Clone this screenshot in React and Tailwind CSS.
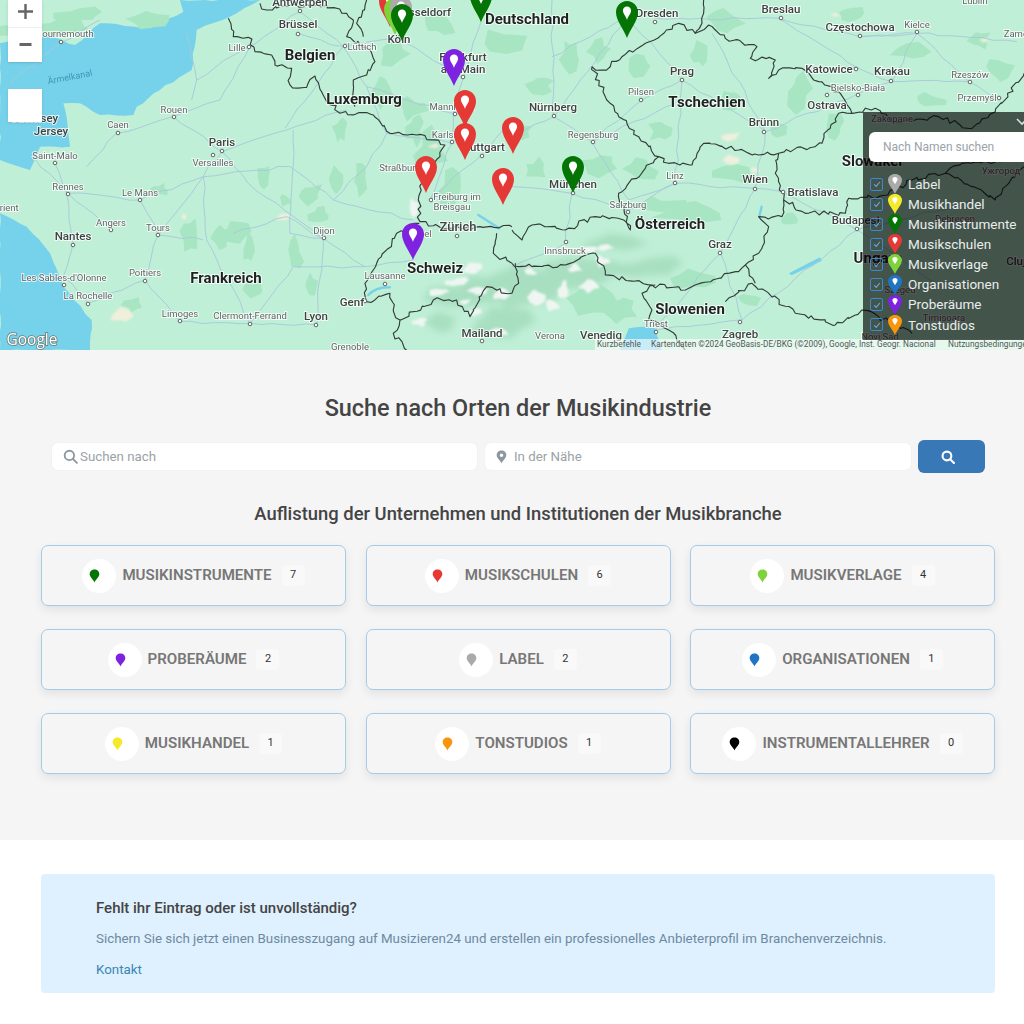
import React from "react";

const FONT = "Roboto, 'Liberation Sans', sans-serif";

/* ---------------- MAP DATA ---------------- */
const boldLabels = [
  ["Belgien", 310, 60], ["Luxemburg", 364, 104], ["Frankreich", 226, 283], ["Schweiz", 435, 273],
  ["Deutschland", 527, 24], ["Tschechien", 707, 107], ["Österreich", 670, 229], ["Slowenien", 690, 314],
  ["Slowakei", 872, 166], ["Ungarn", 878, 263],
];

const cityLabels = [
  ["Antwerpen", 300, 6], ["Brüssel", 298, 28], ["Köln", 399, 43], ["Jersey", 51, 135], ["Guernsey", 34, 122],
  ["Paris", 222, 146], ["Nantes", 73, 240], ["Lyon", 316, 320], ["Genf", 352, 306], ["Mailand", 482, 337],
  ["Frankfurt", 463, 61], ["am Main", 463, 73], ["Düsseldorf", 423, 16],
  ["Prag", 682, 75], ["Wien", 755, 183], ["Bratislava", 813, 196], ["Budapest", 856, 224], ["Zagreb", 740, 338],
  ["Venedig", 601, 339], ["Nürnberg", 553, 111], ["Breslau", 781, 13], ["Katowice", 829, 73], ["Krakau", 892, 75],
  ["Częstochowa", 860, 31], ["Ostrava", 827, 109], ["Brünn", 764, 126], ["Graz", 720, 248], ["Stuttgart", 482, 151],
  ["München", 573, 188], ["Dresden", 657, 17], ["Cluj-", 1018, 265],
];

const smallLabels = [
  ["Bournemouth", 65, 37], ["Rouen", 174, 113], ["Caen", 118, 128], ["Versailles", 213, 166], ["Saint-Malo", 55, 159],
  ["Rennes", 68, 190], ["Le Mans", 140, 196], ["Angers", 111, 226], ["Tours", 158, 231], ["Poitiers", 145, 276],
  ["Les Sables-d'Olonne", 64, 281], ["La Rochelle", 88, 299], ["Limoges", 180, 317], ["Clermont-Ferrand", 250, 319],
  ["Dijon", 324, 234], ["Lausanne", 385, 279], ["Lille", 237, 51], ["Lüttich", 362, 50], ["Mannheim", 452, 110],
  ["Karlsruhe", 452, 138], ["Straßburg", 400, 171], ["Freiburg im", 457, 200], ["Breisgau", 452, 210], ["Basel", 420, 237],
  ["Grenoble", 350, 350], ["Triest", 656, 327], ["Verona", 550, 339], ["Regensburg", 593, 138], ["Pilsen", 641, 95],
  ["Linz", 675, 179], ["Salzburg", 628, 208], ["Innsbruck", 565, 254], ["Kielce", 917, 28], ["Rzeszów", 970, 78],
  ["Przemyśl", 977, 101], ["Bielsko-Biała", 858, 91], ["Zakopane", 892, 122], ["Lublin", 975, 4], ["Zamo", 1016, 37],
  ["Szeged", 900, 293], ["Debrecen", 955, 222], ["Ужгород", 1001, 174], ["Timisoara", 944, 321], ["Novi Sad", 880, 340],
  ["Orient", 6, 211],
];

const cityDots = [
  [300, 11], [298, 34], [61, 42], [249, 47], [345, 46], [174, 117], [118, 133], [213, 155], [222, 151], [55, 163],
  [68, 194], [140, 200], [111, 230], [158, 235], [73, 245], [145, 281], [64, 285], [88, 304], [180, 321], [250, 324],
  [316, 325], [324, 238], [385, 284], [365, 301], [457, 236], [482, 341], [463, 77], [455, 114], [452, 142], [482, 156],
  [431, 200], [554, 116], [593, 142], [641, 100], [682, 80], [755, 189], [783, 192], [764, 132], [720, 253], [675, 183],
  [628, 212], [566, 242], [573, 193], [655, 22], [781, 18], [860, 36], [917, 32], [856, 69], [891, 81], [827, 95],
  [858, 95], [970, 82], [999, 98], [857, 229], [740, 322], [656, 332],
];

// coordinates below are on a 3x grid, the group is scaled down to page pixels
const borders = [
  "M685 55 L700 110 L745 112 L765 155 L815 165 L825 195 L875 205 L870 255 L920 262 L945 228 L975 295 L1020 340 L1120 345 L1170 400 L1250 405 L1335 435 L1320 470 L1265 550 L1255 600 L1260 665 L1320 682 L1440 680 L1536 680",
  "M1258 670 L1190 700 L1130 790 L1095 850 L1100 905 L1170 880 L1180 930 L1200 960 L1180 1000 L1220 1050",
  "M1200 960 L1300 900 L1370 900 L1410 950 L1460 860 L1536 880",
  "M780 10 L800 30 L870 15 L950 15 L1040 40 L1060 60 L1040 110 L1110 150 L1125 185 L1100 225 L1060 240 L1065 320",
  "M1100 0 L1070 70 L1090 110",
  "M1490 700 L1480 760 L1536 790",
];
const bordersEast = [
  "M240 200 L270 210 L330 170 L400 130 L500 70 L550 100 L590 75 L640 115 L735 140 L715 175 L790 180 L770 235 L800 210 L870 205 L920 245 L985 280 L1020 340 L980 340 L930 430 L800 460 L740 465 L680 450 L610 432 L575 430 L540 495 L470 490 L440 470 L380 410 L320 350 L280 290 L240 200",
  "M575 0 L570 70 L550 100",
  "M440 470 L400 505 L320 580 L355 690 L335 660 L250 650 L160 690 L60 675 L30 720 L0 690",
  "M0 790 L60 800 L160 795 L250 760 L280 825 L420 855 L520 870 L680 815 L700 795 L740 760 L770 680 L740 650 L810 650 L815 600 L790 520 L800 460",
  "M430 855 L390 880 L420 930 L410 960 L470 990 L520 1050",
  "M640 905 L720 850 L850 940 L970 975 L1050 930 L1100 950 L1200 1000",
  "M700 795 L730 850",
  "M815 600 L880 640 L1000 640 L1010 595 L1100 590 L1200 540 L1300 520 L1380 560 L1450 600 L1480 560 L1536 500",
  "M1020 340 L1090 325 L1140 365 L1280 350 L1380 385 L1450 335 L1536 220",
  "M1300 520 L1350 490 L1536 480",
  "M0 880 L20 850 L10 790",
];

const roads = [
  "M30 250 L180 130 L300 60", "M165 490 L200 580 L220 730", "M205 580 L420 600 L610 530 L870 500", "M420 600 L475 705 L610 530",
  "M520 350 L665 455 L860 390 L1040 330", "M665 455 L610 530 L620 720 L750 970", "M665 455 L745 550 L970 715 L950 975", "M970 715 L1095 800 L1240 780",
  "M475 705 L435 840 L265 910", "M435 840 L540 965 L750 970 L950 975", "M220 730 L190 830 L265 910", "M750 140 L660 300 L520 350", "M745 145 L900 35",
  "M895 100 L1030 140 L1190 115", "M900 35 L1030 140 L855 385", "M1030 140 L1100 260 L1360 340", "M1390 235 L1360 340 L1355 430 L1290 600",
  "M1190 115 L1390 235 L1445 60", "M1445 465 L1290 600", "M870 500 L1000 600 L1240 660", "M560 100 L590 240 L575 300", "M1100 260 L1160 400 L1355 430",
  "M260 500 L350 400 L520 350", "M100 470 L205 580 L335 690", "M880 390 L870 700 L970 715", "M1445 465 L1536 370",
  "M590 240 L760 130", "M610 720 L475 705", "M750 970 L880 800 L1095 800", "M1000 600 L1100 500 L1160 400", "M700 700 L860 650 L970 715",
];
const roadsEast = [
  "M125 350 L240 425 L350 600", "M125 350 L10 400", "M125 350 L345 50", "M345 50 L510 240 L760 395", "M510 240 L390 300 L240 425", "M510 240 L490 550 L350 600",
  "M760 395 L730 565 L490 550", "M760 395 L1040 280 L1140 245", "M730 565 L625 760 L430 990", "M730 565 L810 575 L1035 690 L1300 870", "M430 55 L800 55 L1045 110 L1215 100 L1515 125",
  "M800 55 L1040 205 L1140 245 L1370 245 L1460 295", "M180 580 L350 630 L490 550", "M180 580 L160 730 L0 800", "M625 760 L690 960 L430 990", "M1035 690 L690 960", "M1035 690 L1400 600",
  "M1040 110 L1215 100 L1140 245", "M120 0 L125 350", "M345 50 L120 170", "M0 560 L180 580",
  "M600 100 L760 395", "M240 425 L490 310", "M900 200 L1040 205", "M1215 100 L1370 245",
];

const patches = [
  [60, 28, 26, 8], [150, 20, 18, 8], [10, 30, 12, 6], [80, 15, 20, 7], [235, 232, 12, 10], [220, 235, 10, 12], [250, 250, 6, 14], [310, 195, 14, 12],
  [335, 180, 10, 14], [285, 200, 7, 6], [295, 255, 8, 18], [320, 215, 10, 8], [265, 175, 6, 12], [340, 130, 6, 14], [395, 55, 14, 12], [380, 90, 10, 14], [412, 110, 12, 10],
  [430, 150, 14, 20], [415, 130, 8, 14], [450, 190, 10, 18], [505, 40, 20, 10], [440, 25, 14, 10], [570, 55, 10, 16], [540, 85, 14, 8], [600, 50, 10, 10], [520, 130, 12, 8],
  [535, 170, 10, 10], [600, 165, 18, 10], [640, 170, 14, 10], [660, 130, 10, 10], [725, 20, 16, 12], [700, 55, 8, 12], [730, 100, 10, 10], [640, 65, 12, 10], [690, 215, 28, 10], [655, 205, 24, 8],
  [800, 90, 12, 18], [835, 125, 10, 14], [780, 130, 10, 8], [850, 15, 14, 8], [910, 50, 16, 8], [980, 40, 10, 8], [1000, 70, 12, 10], [930, 100, 14, 6], [735, 175, 18, 8], [590, 300, 22, 14],
  [620, 310, 14, 10], [690, 280, 20, 8], [790, 220, 8, 6], [750, 300, 10, 6], [160, 190, 8, 6], [360, 180, 6, 14], [190, 235, 8, 14], [135, 305, 10, 6], [310, 285, 6, 10], [255, 290, 10, 8],
];

const alps = [
  [470, 295, 34, 14], [525, 285, 36, 20], [590, 272, 44, 18], [650, 268, 30, 10], [500, 322, 26, 14], [440, 320, 18, 10], [620, 244, 34, 8],
];
const snow = [
  [440, 292, 10, 4], [458, 282, 10, 4], [472, 268, 8, 5], [478, 290, 12, 4], [503, 295, 9, 6], [465, 302, 7, 3], [535, 298, 13, 8], [552, 305, 9, 6], [530, 272, 7, 4], [564, 290, 5, 9],
  [560, 250, 12, 3], [585, 250, 12, 4], [606, 248, 8, 3], [588, 285, 9, 6], [602, 262, 6, 5], [575, 268, 6, 4], [420, 322, 7, 4], [475, 312, 6, 3], [414, 206, 4, 8], [500, 332, 8, 3],
];
const sand = [
  [283, 217, 6, 3], [184, 216, 3, 3], [124, 316, 12, 7], [730, 137, 12, 5], [730, 160, 12, 5], [755, 170, 6, 3], [835, 15, 5, 2], [435, 146, 5, 2], [985, 40, 4, 2],
];

const mapPins = [
  { x: 390, y: -10, color: "#e53935" },
  { x: 395, y: -2, color: "#7ed23a" },
  { x: 401, y: -4, color: "#aaaaaa" },
  { x: 402, y: 4, color: "#047404" },
  { x: 481, y: -15, color: "#7ed23a" },
  { x: 481, y: -15, color: "#047404" },
  { x: 627, y: 1, color: "#047404" },
  { x: 454, y: 49, color: "#7e22e0" },
  { x: 465, y: 90, color: "#e53935" },
  { x: 465, y: 123, color: "#e53935" },
  { x: 513, y: 117, color: "#e53935" },
  { x: 426, y: 156, color: "#e53935" },
  { x: 503, y: 168, color: "#e53935" },
  { x: 573, y: 156, color: "#047404" },
  { x: 413, y: 223, color: "#7e22e0" },
];

/* ---------------- PAGE DATA ---------------- */
const filterRows = [
  ["Label", "#aaaaaa"], ["Musikhandel", "#f5ea2a"], ["Musikinstrumente", "#047404"], ["Musikschulen", "#e53935"],
  ["Musikverlage", "#7ed23a"], ["Organisationen", "#1f74c4"], ["Proberäume", "#7e22e0"], ["Tonstudios", "#f9950c"],
];

const categories = [
  ["MUSIKINSTRUMENTE", 7, "#047404"], ["MUSIKSCHULEN", 6, "#e53935"], ["MUSIKVERLAGE", 4, "#7ed23a"],
  ["PROBERÄUME", 2, "#7e22e0"], ["LABEL", 2, "#aaaaaa"], ["ORGANISATIONEN", 1, "#1f74c4"],
  ["MUSIKHANDEL", 1, "#f5ea2a"], ["TONSTUDIOS", 1, "#f9950c"], ["INSTRUMENTALLEHRER", 0, "#000000"],
];

const PIN_PATH = "M11 0C4.9 0 0 5 0 11.2C0 19.5 8.2 29 11 37C13.8 29 22 19.5 22 11.2C22 5 17.1 0 11 0Z";
const DROP_PATH = "M11 5.5C8.6 5.5 6.9 7.4 6.9 9.6C6.9 12.6 9.9 15.2 11 19C12.1 15.2 15.1 12.6 15.1 9.6C15.1 7.4 13.4 5.5 11 5.5Z";

// repeatable noise, so the drawing is the same on every run
const noise = (n) => {
  const v = Math.sin(n * 12.9898) * 43758.5453;
  return v - Math.floor(v) - 0.5;
};

// breaks a straight polyline into small jagged steps, as borders and roads look on a map
const wiggle = (d, amp, step) => {
  const nums = d.match(/-?\d+/g).map(Number);
  let out = `M${nums[0]} ${nums[1]}`;
  let k = nums[0] + nums[1];
  for (let i = 2; i < nums.length; i += 2) {
    const [x0, y0, x1, y1] = [nums[i - 2], nums[i - 1], nums[i], nums[i + 1]];
    const n = Math.max(1, Math.round(Math.hypot(x1 - x0, y1 - y0) / step));
    for (let j = 1; j <= n; j++) {
      const t = j / n;
      const a = j === n ? 0 : amp;
      out += ` L${(x0 + (x1 - x0) * t + noise(k++) * a).toFixed(1)} ${(y0 + (y1 - y0) * t + noise(k++) * a).toFixed(1)}`;
    }
  }
  return out;
};

// irregular blob instead of a clean ellipse
const blob = (cx, cy, rx, ry, seed) => {
  const pts = [];
  for (let i = 0; i < 10; i++) {
    const a = (i / 10) * Math.PI * 2 + seed;
    const r = 1 + noise(seed * 7 + i) * 0.9;
    pts.push(`${(cx + Math.cos(a) * rx * r).toFixed(1)},${(cy + Math.sin(a) * ry * r).toFixed(1)}`);
  }
  return pts.join(" ");
};

const PinIcon = ({ color, className }) => (
  <svg viewBox="0 0 22 37" preserveAspectRatio="none" className={className}>
    <path d={PIN_PATH} fill={color} />
    <path d={DROP_PATH} fill="#fff" />
  </svg>
);

const PlainPin = ({ color }) => (
  <svg viewBox="0 0 12 16" className="w-[11px] h-[14px]">
    <path d="M6 0.5C2.8 0.5 0.5 2.9 0.5 5.8C0.5 9.4 4.6 12 6 15.5C7.4 12 11.5 9.4 11.5 5.8C11.5 2.9 9.2 0.5 6 0.5Z" fill={color} />
  </svg>
);

const SearchGlyph = ({ className, stroke = "#8d979f", width = 2 }) => (
  <svg viewBox="0 0 16 16" className={className} fill="none" stroke={stroke} strokeWidth={width} strokeLinecap="round">
    <circle cx="6.8" cy="6.8" r="5" />
    <path d="M10.5 10.5L14.8 14.8" />
  </svg>
);

const MapArt = () => (
  <svg viewBox="0 0 1024 350" className="w-full h-full blur-[0.5px]" style={{ fontFamily: FONT }}>
    <rect width="1024" height="350" fill="#bfefd6" />

    {/* water */}
    <g transform="scale(0.3333)" fill="#76d2ea">
      <path d={wiggle("M0 640 L80 680 L150 760 L190 860 L275 960 L270 1050 L0 1050 L0 640", 6, 24)} />
      <path d={wiggle("M0 480 L90 510 L120 440 L210 440 L205 400 L190 310 L240 310 L300 345 L400 345 L410 320 L480 270 L575 210 L590 90 L690 50 L780 0 L540 0 L550 35 L450 85 L300 70 L225 135 L120 100 L0 130 L0 480", 6, 24)} />
      <path d="M1887 985 Q1930 975 1965 985 L1985 1050 L1860 1050 Z" />
      <path d="M2367 820 L2460 772 L2466 782 L2375 826 Z" />
    </g>
    <g transform="scale(0.3333)" fill="none" stroke="#76d2ea" strokeWidth="7" strokeLinecap="round">
      <path d="M1105 885 Q1130 860 1170 862" />
      <path d="M1435 645 L1498 685" />
      <path d="M2285 620 L2278 650" />
    </g>

    {/* forests and relief */}
    <g className="blur-[3px]">
      {alps.map(([cx, cy, rx, ry], i) => (
        <polygon key={i} points={blob(cx, cy, rx, ry, i + 1)} fill="#a9dfc1" />
      ))}
    </g>
    <g className="blur-[0.6px]">
      {patches.map(([cx, cy, rx, ry], i) => (
        <polygon key={i} points={blob(cx, cy, rx, ry, i + 1)} fill="#a8e5c3" />
      ))}
    </g>
    <g className="blur-[0.8px]">
      {snow.map(([cx, cy, rx, ry], i) => (
        <polygon key={i} points={blob(cx, cy, rx, ry, i + 3)} fill="#eff6f2" />
      ))}
      {sand.map(([cx, cy, rx, ry], i) => (
        <polygon key={i} points={blob(cx, cy, rx, ry, i + 5)} fill="#efefdc" />
      ))}
    </g>

    {/* roads */}
    <g fill="none" stroke="#a8c8da" strokeWidth="2.8" strokeLinejoin="round">
      <g transform="scale(0.3333)">
        {roads.map((d) => <path key={d} d={wiggle(d, 9, 34)} />)}
      </g>
      <g transform="translate(512 0) scale(0.3333)">
        {roadsEast.map((d) => <path key={d} d={wiggle(d, 9, 34)} />)}
      </g>
    </g>

    {/* country borders */}
    <g fill="none" stroke="#333c3a" strokeWidth="3.4" strokeLinejoin="round">
      <g transform="scale(0.3333)">
        {borders.map((d) => <path key={d} d={wiggle(d, 14, 13)} />)}
      </g>
      <g transform="translate(512 0) scale(0.3333)">
        {bordersEast.map((d) => <path key={d} d={wiggle(d, 14, 13)} />)}
      </g>
    </g>

    {/* city dots */}
    {cityDots.map(([cx, cy]) => (
      <circle key={`${cx}-${cy}`} cx={cx} cy={cy} r="1.8" fill="#fff" stroke="#555" strokeWidth="0.9" />
    ))}

    {/* labels */}
    <text x="70" y="80" fontSize="9" fill="#3f97b5" textAnchor="middle" transform="rotate(-11 70 78)">Ärmelkanal</text>
    <g textAnchor="middle" stroke="#fff" strokeWidth="2" paintOrder="stroke" strokeOpacity="0.75">
      {smallLabels.map(([t, x, y]) => (
        <text key={t} x={x} y={y} fontSize="9.5" fill="#5f6664">{t}</text>
      ))}
      {cityLabels.map(([t, x, y]) => (
        <text key={t} x={x} y={y} fontSize="11.5" fontWeight="500" fill="#3f4442">{t}</text>
      ))}
      <text x="458" y="231" fontSize="13" fontWeight="500" fill="#3f4442">Zürich</text>
      {boldLabels.map(([t, x, y]) => (
        <text key={t} x={x} y={y} fontSize="15" fontWeight="700" fill="#1e2321">{t}</text>
      ))}
    </g>

    {/* markers */}
    {mapPins.map((p, i) => (
      <g key={i} transform={`translate(${p.x - 11} ${p.y})`}>
        <path d={PIN_PATH} fill={p.color} />
        <path d={DROP_PATH} fill="#fff" />
      </g>
    ))}

    <text x="32" y="345" fontSize="15.5" fontWeight="500" fill="#fff" stroke="#6b7a78" strokeWidth="1.6" paintOrder="stroke" textAnchor="middle" fontFamily="'Open Sans', sans-serif">Google</text>
  </svg>
);

const MapSection = () => (
  <section className="relative h-[350px] overflow-hidden">
    <MapArt />

    {/* ZOOM CONTROLS */}
    <div className="absolute left-2 top-0 w-[34px] h-[62px] bg-white shadow-sm flex flex-col items-center text-[#555]">
      <svg viewBox="0 0 16 16" className="w-[15px] h-[15px] mt-1">
        <path d="M6.7 0h2.6v6.7H16v2.6H9.3V16H6.7V9.3H0V6.7h6.7z" fill="#666" />
      </svg>
      <div className="w-full h-px bg-[#eee] mt-2" />
      <svg viewBox="0 0 16 4" className="w-[15px] h-[3px] mt-[15px]">
        <rect width="16" height="4" fill="#666" />
      </svg>
    </div>
    <div className="absolute left-2 top-[89px] w-[34px] h-[33px] bg-white shadow-sm" />

    {/* ATTRIBUTION */}
    <div
      className="absolute bottom-0 right-0 h-[11px] flex items-center bg-white/60 text-[8.3px] leading-none text-[#555] whitespace-nowrap"
      style={{ fontFamily: FONT }}
    >
      <span className="w-[56px] pl-[2px]">Kurzbefehle</span>
      <span className="w-[297px]">Kartendaten ©2024 GeoBasis-DE/BKG (©2009), Google, Inst. Geogr. Nacional</span>
      <span className="w-[76px] overflow-hidden">Nutzungsbedingungen</span>
    </div>

    {/* FILTER PANEL */}
    <div className="absolute left-[863px] top-[112px] w-[161px] h-[228px] bg-black/65 pl-[6px] pt-[20px]">
      <svg viewBox="0 0 12 8" className="absolute top-[6px] right-[-4px] w-[12px] h-[8px]" fill="none" stroke="#ddd" strokeWidth="1.6">
        <path d="M1 1L6 6L11 1" />
      </svg>
      <div className="h-[30px] bg-white rounded-l-md flex items-center pl-[14px] text-[12px] text-[#9aa3a8]">
        Nach Namen suchen
      </div>
      <ul className="mt-[12px] flex flex-col">
        {filterRows.map(([name, color]) => (
          <li key={name} className="h-[20.1px] flex items-center">
            <span className="w-[13px] h-[13px] border border-[#3b8ad0] rounded-[2px] flex items-center justify-center ml-px">
              <svg viewBox="0 0 10 10" className="w-[8px] h-[8px]" fill="none" stroke="#6fa9da" strokeWidth="1.3">
                <path d="M1.5 5.5L4 8L8.5 2.5" />
              </svg>
            </span>
            <PinIcon color={color} className="w-[14px] h-[20px] ml-[5px] shrink-0" />
            <span className="ml-[6px] text-[13.5px] text-[#e9edeb] whitespace-nowrap">{name}</span>
          </li>
        ))}
      </ul>
    </div>
  </section>
);

const CategoryCard = ({ name, count, color }) => (
  <a className="h-[61px] border border-[#a5cbe8] rounded-[7px] bg-[#f5f5f5] shadow-[0_4px_10px_rgba(0,0,0,0.08)] flex items-center justify-center">
    <span className="w-[34px] h-[34px] rounded-full bg-white flex items-center justify-center pr-[9px] mr-[6px]">
      <PlainPin color={color} />
    </span>
    <span className="text-[15.1px] font-semibold text-[#777] whitespace-nowrap">{name}</span>
    <span className="ml-[10px] w-[23px] h-[21px] rounded bg-[#f9f9f9] flex items-center justify-center text-[11px] text-[#333]">
      {count}
    </span>
  </a>
);

export default function App() {
  return (
    <div className="min-h-screen bg-white" style={{ fontFamily: FONT }}>
      <MapSection />

      {/* SEARCH */}
      <section className="h-[490px] bg-[#f5f5f5] pl-[41px] pr-[29px] pt-[43px]">
        <h1 className="text-[23.4px] leading-[30px] font-medium text-[#444] text-center">
          Suche nach Orten der Musikindustrie
        </h1>

        <div className="mt-[17px] ml-[11px] mr-[10px] flex items-center">
          <div className="w-[425px] h-[27px] bg-white rounded-md flex items-center pl-[11px] text-[13.3px] text-[#9aa2a8] shadow-[0_0_2px_rgba(0,0,0,0.05)]">
            <SearchGlyph className="w-[15px] h-[15px] mr-[2px]" />
            Suchen nach
          </div>
          <div className="w-[426px] h-[27px] ml-[8px] bg-white rounded-md flex items-center pl-[11px] text-[13.3px] text-[#9aa2a8] shadow-[0_0_2px_rgba(0,0,0,0.05)]">
            <svg viewBox="0 0 12 16" className="w-[11px] h-[14px] mr-[7px]">
              <path fillRule="evenodd" d="M6 0.5C2.8 0.5 0.5 2.9 0.5 5.8C0.5 9.4 4.6 12 6 15.5C7.4 12 11.5 9.4 11.5 5.8C11.5 2.9 9.2 0.5 6 0.5ZM6 4A2 2 0 1 1 6 8A2 2 0 1 1 6 4Z" fill="#8d979f" />
            </svg>
            In der Nähe
          </div>
          <button className="w-[67px] h-[33px] ml-[7px] pr-[8px] rounded-md bg-[#3878b7] flex items-center justify-center">
            <SearchGlyph className="w-[14px] h-[14px]" stroke="#fff" width={2.4} />
          </button>
        </div>

        <h2 className="mt-[28px] text-[18.4px] leading-[26px] font-medium text-[#444] text-center">
          Auflistung der Unternehmen und Institutionen der Musikbranche
        </h2>

        <div className="mt-[18px] grid grid-cols-3 gap-x-[19.5px] gap-y-[23px]">
          {categories.map(([name, count, color]) => (
            <CategoryCard key={name} name={name} count={count} color={color} />
          ))}
        </div>
      </section>

      {/* NOTICE */}
      <section className="pl-[41px] pr-[29px] pt-[34px] pb-[31px]">
        <div className="h-[119px] bg-[#dff0fe] rounded pl-[55px] pt-[24px]">
          <h3 className="text-[15px] leading-[20px] font-medium text-[#444]">Fehlt ihr Eintrag oder ist unvollständig?</h3>
          <p className="mt-[11px] text-[13.35px] leading-[20px] text-[#6d8aa2]">
            Sichern Sie sich jetzt einen Businesszugang auf Musizieren24 und erstellen ein professionelles Anbieterprofil im Branchenverzeichnis.
          </p>
          <a className="block mt-[11px] text-[13.35px] leading-[20px] text-[#3a86b7]">Kontakt</a>
        </div>
      </section>
    </div>
  );
}
